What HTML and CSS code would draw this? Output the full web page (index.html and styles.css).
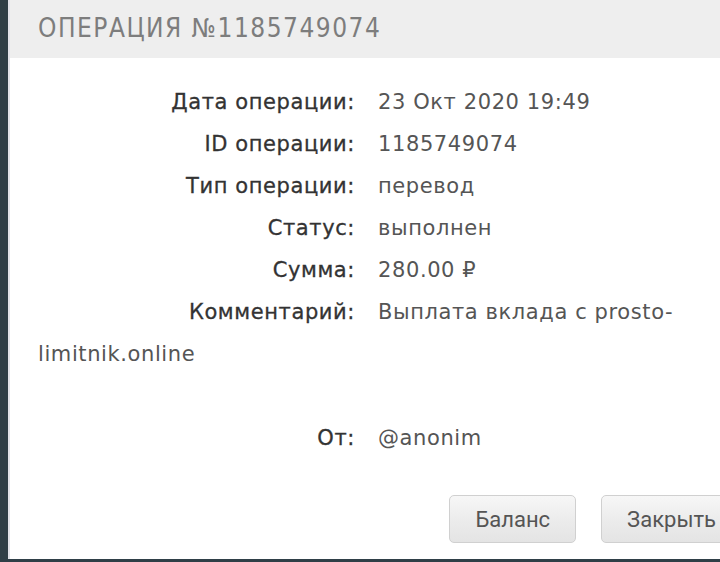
FILE: index.html
```html
<!DOCTYPE html>
<html lang="ru">

<head>
    <meta charset="UTF-8">
    <meta name="viewport" content="width=device-width, initial-scale=1.0">
    <title>Операция</title>
    <link rel="stylesheet" href="styles.css">
</head>

<body>
    <div class="dialog">
        <div class="dialog-header">ОПЕРАЦИЯ №1185749074</div>
        <div class="dialog-body">
            <div class="row"><span class="label">Дата операции:</span><span class="value">23 Окт 2020 19:49</span></div>
            <div class="row"><span class="label">ID операции:</span><span class="value">1185749074</span></div>
            <div class="row"><span class="label">Тип операции:</span><span class="value">перевод</span></div>
            <div class="row"><span class="label">Статус:</span><span class="value">выполнен</span></div>
            <div class="row"><span class="label">Сумма:</span><span class="value">280.00 ₽</span></div>
            <div class="row"><span class="label">Комментарий:</span><span class="value">Выплата вклада с prosto-</span><br><span class="value">limitnik.online</span><br><br></div>
            <div class="row"><span class="label">От:</span><span class="value">@anonim</span></div>
        </div>
        <div class="dialog-buttons">
            <button type="button">Баланс</button>
            <button type="button">Закрыть</button>
        </div>
    </div>
</body>

</html>
```

FILE: styles.css
```css
html, body {
    margin: 0;
    height: 100%;
    overflow: hidden;
}

body {
    background: #2f3f47;
}

.dialog {
    width: 770px;
    height: 559px;
    margin-left: 8px;
    border-left: 2px solid #e2e4ea;
    background: #fff;
    box-sizing: border-box;
}

.dialog-header {
    height: 58px;
    background: #eeeeee;
    color: #7d7d7d;
    font-family: "DejaVu Sans Condensed", "DejaVu Sans", sans-serif;
    font-size: 26px;
    letter-spacing: 1.5px;
    line-height: 56px;
    padding-left: 28px;
}

.dialog-body {
    padding: 23px 0 0 28px;
    width: 680px;
}

.row {
    font-family: "DejaVu Sans", sans-serif;
    font-size: 21px;
    letter-spacing: 0.6px;
    line-height: 42px;
    color: #555;
}

.row .label {
    display: inline-block;
    width: 317px;
    text-align: right;
    margin-right: 23px;
    color: #333;
    -webkit-text-stroke: 0.3px #333;
}

.dialog-buttons {
    display: flex;
    justify-content: flex-end;
    gap: 25px;
    margin-top: 36px;
    width: 732px;
}

.dialog-buttons button {
    height: 48px;
    padding: 0 25px;
    border: 1px solid #d0d0d0;
    border-radius: 5px;
    background: linear-gradient(#f7f7f7, #ececec 50%, #e4e4e4);
    font-family: Roboto, sans-serif;
    font-size: 22px;
    color: #555;
}
```
